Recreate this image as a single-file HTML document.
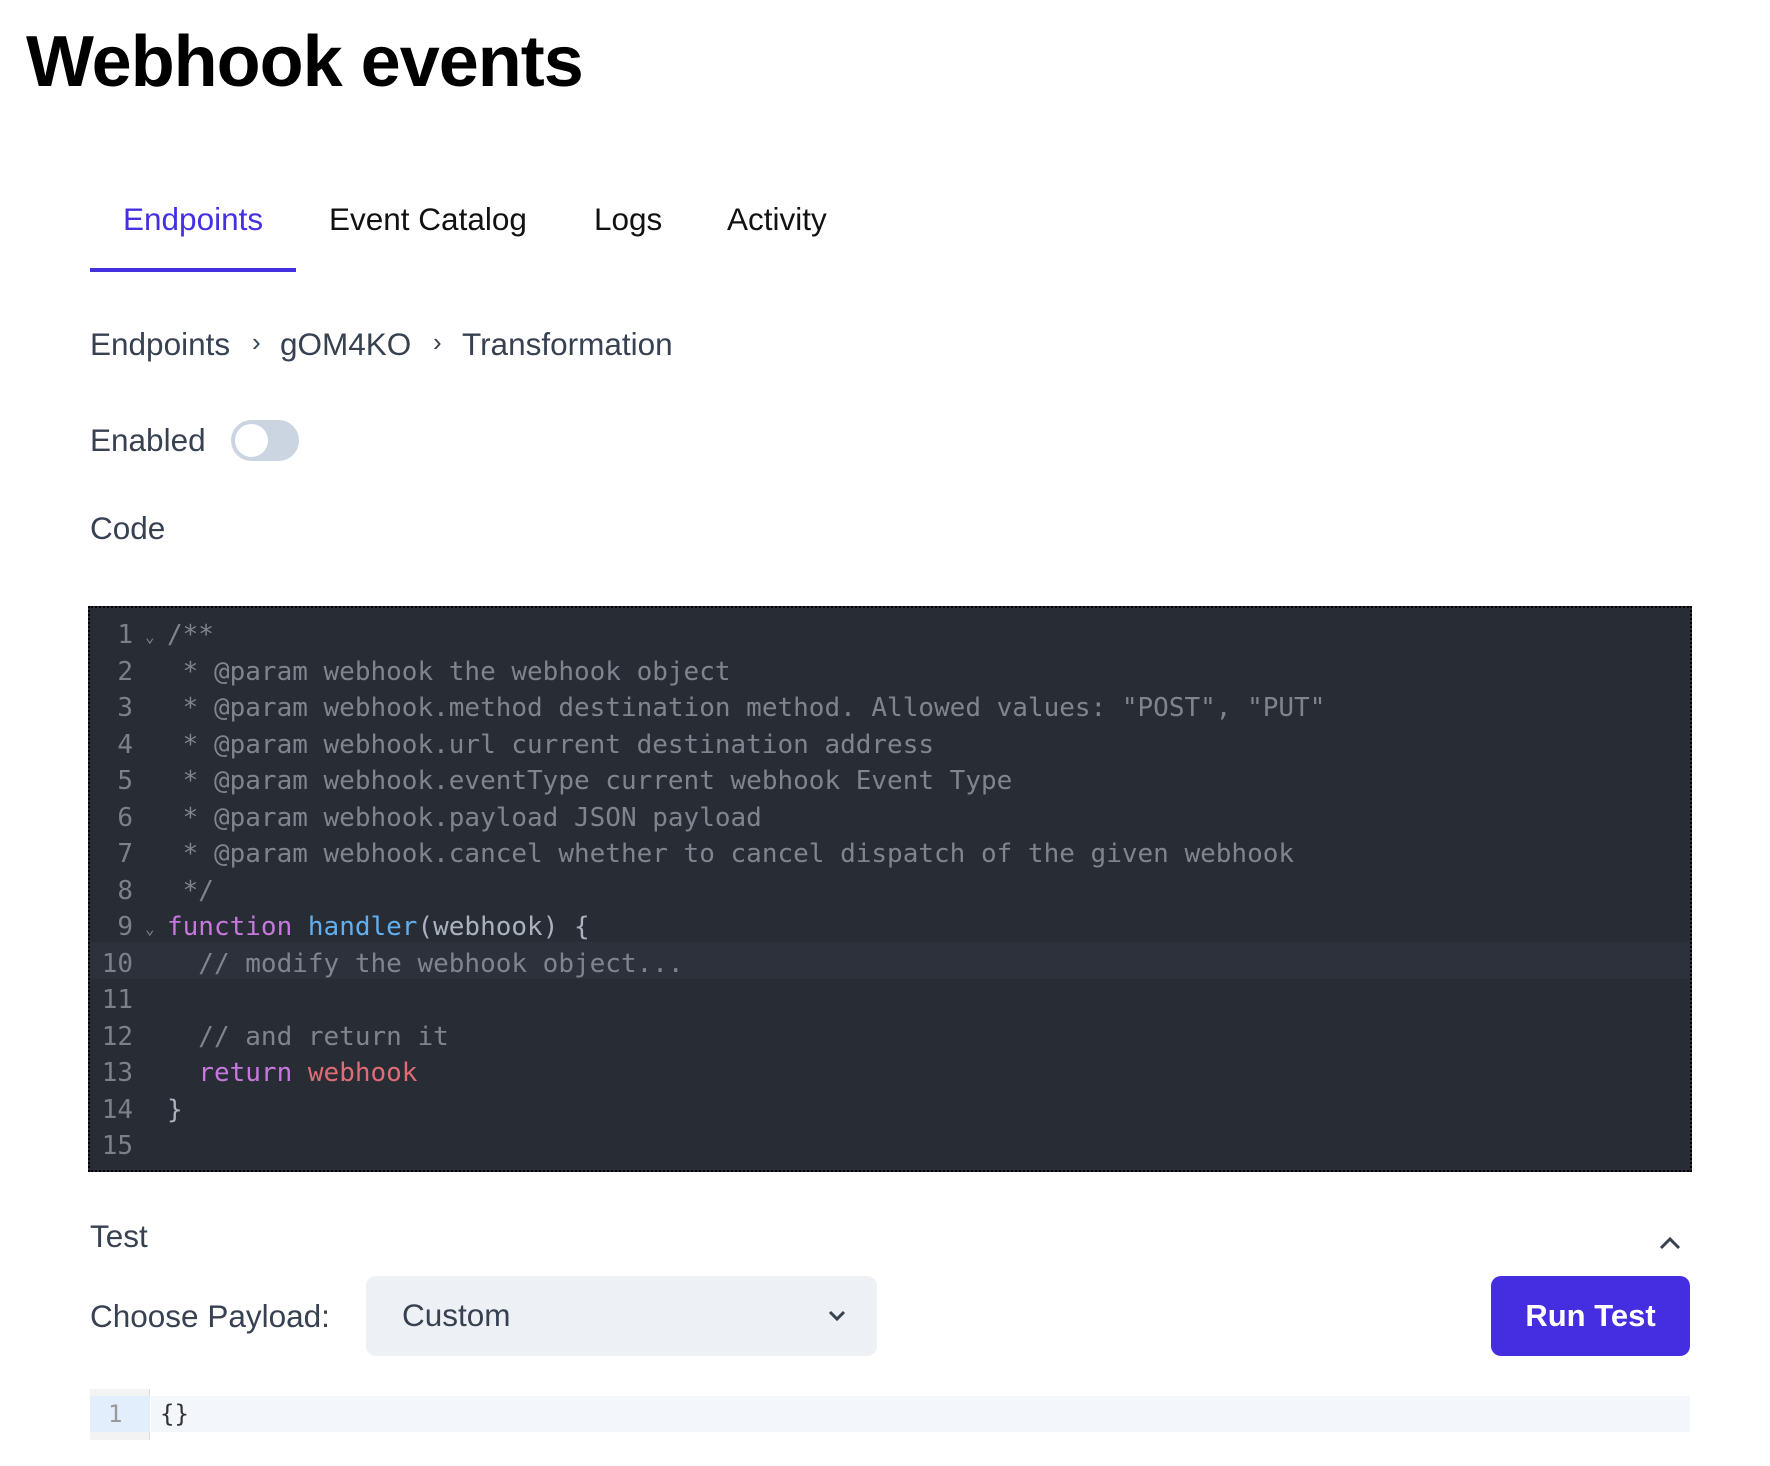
<!DOCTYPE html>
<html><head><meta charset="utf-8"><style>
*{margin:0;padding:0;box-sizing:border-box}
body{width:1770px;height:1466px;background:#fff;position:relative;font-family:"Liberation Sans",sans-serif;color:#374151;overflow:hidden}
.a{position:absolute;white-space:pre}
h1{position:absolute;left:26px;top:20px;font-size:72px;font-weight:700;color:#000;letter-spacing:-1px;line-height:84px}
.tab{position:absolute;top:201px;font-size:31.5px;line-height:36px;color:#111}
.t{font-size:31.5px;line-height:36px}
.code{position:absolute;left:88px;top:606px;width:1604px;height:566px;background:#282c34;border:2px dotted #000;font-family:"DejaVu Sans Mono","Liberation Mono",monospace;font-size:26px;color:#7f848e}
.ln{position:absolute;left:0;width:43px;text-align:right;color:#7b808a}
.l{position:absolute;left:77px;white-space:pre}
.row{position:absolute;left:0;right:0;height:36.5px;line-height:36.5px}
</style></head><body>
<h1>Webhook events</h1>
<div class="tab" style="left:123px;color:#4430e0">Endpoints</div>
<div class="tab" style="left:329px">Event Catalog</div>
<div class="tab" style="left:594px">Logs</div>
<div class="tab" style="left:727px">Activity</div>
<div class="a" style="left:90px;top:268px;width:206px;height:4px;background:#4430e0"></div>

<div class="a t" style="left:90px;top:326px">Endpoints</div>
<div class="a t" style="left:252px;top:324px;font-size:26px">›</div>
<div class="a t" style="left:280px;top:326px">gOM4KO</div>
<div class="a t" style="left:433px;top:324px;font-size:26px">›</div>
<div class="a t" style="left:462px;top:326px">Transformation</div>

<div class="a t" style="left:90px;top:422px">Enabled</div>
<div class="a" style="left:231px;top:420px;width:68px;height:41px;border-radius:21px;background:#cbd5e1"></div>
<div class="a" style="left:235px;top:424px;width:33px;height:33px;border-radius:50%;background:#fff"></div>

<div class="a t" style="left:90px;top:510px">Code</div>

<div class="code">
<div class="row" style="top:334px;background:#2c313b"></div>
<div class="row" style="top:9px"><span class="ln">1</span><span class="a" style="left:55px;top:2px;font-size:16px">⌄</span><span class="l">/**</span></div>
<div class="row" style="top:45.5px"><span class="ln">2</span><span class="l"> * @param webhook the webhook object</span></div>
<div class="row" style="top:82px"><span class="ln">3</span><span class="l"> * @param webhook.method destination method. Allowed values: "POST", "PUT"</span></div>
<div class="row" style="top:118.5px"><span class="ln">4</span><span class="l"> * @param webhook.url current destination address</span></div>
<div class="row" style="top:155px"><span class="ln">5</span><span class="l"> * @param webhook.eventType current webhook Event Type</span></div>
<div class="row" style="top:191.5px"><span class="ln">6</span><span class="l"> * @param webhook.payload JSON payload</span></div>
<div class="row" style="top:228px"><span class="ln">7</span><span class="l"> * @param webhook.cancel whether to cancel dispatch of the given webhook</span></div>
<div class="row" style="top:264.5px"><span class="ln">8</span><span class="l"> */</span></div>
<div class="row" style="top:301px"><span class="ln">9</span><span class="a" style="left:55px;top:2px;font-size:16px">⌄</span><span class="l"><span style="color:#c678dd">function</span> <span style="color:#61afef">handler</span><span style="color:#abb2bf">(webhook) {</span></span></div>
<div class="row" style="top:337.5px"><span class="ln">10</span><span class="l">  // modify the webhook object...</span></div>
<div class="row" style="top:374px"><span class="ln">11</span></div>
<div class="row" style="top:410.5px"><span class="ln">12</span><span class="l">  // and return it</span></div>
<div class="row" style="top:447px"><span class="ln">13</span><span class="l">  <span style="color:#c678dd">return</span> <span style="color:#e06c75">webhook</span></span></div>
<div class="row" style="top:483.5px"><span class="ln">14</span><span class="l" style="color:#abb2bf">}</span></div>
<div class="row" style="top:520px"><span class="ln">15</span></div>
</div>

<div class="a t" style="left:90px;top:1218px">Test</div>
<svg class="a" style="left:1658px;top:1234px" width="24" height="18" viewBox="0 0 24 18"><path d="M3 14 L12 5 L21 14" fill="none" stroke="#374151" stroke-width="3"/></svg>

<div class="a t" style="left:90px;top:1298px">Choose Payload:</div>
<div class="a" style="left:366px;top:1276px;width:511px;height:80px;border-radius:10px;background:#edf0f5"></div>
<div class="a t" style="left:402px;top:1297px">Custom</div>
<svg class="a" style="left:827px;top:1308px" width="20" height="16" viewBox="0 0 20 16"><path d="M3 4 L10 11 L17 4" fill="none" stroke="#374151" stroke-width="3"/></svg>
<div class="a" style="left:1491px;top:1276px;width:199px;height:80px;border-radius:10px;background:#452ee0;color:#fff;font-weight:700;font-size:31px;line-height:80px;text-align:center">Run Test</div>

<div class="a" style="left:90px;top:1389px;width:60px;height:51px;background:#f3f3f3;border-right:1px solid #ddd"></div>
<div class="a" style="left:90px;top:1396px;width:60px;height:36px;background:#e3eefc"></div>
<div class="a" style="left:151px;top:1396px;width:1539px;height:36px;background:#f3f7fc"></div>
<div class="a" style="left:108px;top:1397px;font-family:'DejaVu Sans Mono',monospace;font-size:24px;line-height:34px;color:#999">1</div>
<div class="a" style="left:160px;top:1397px;font-family:'DejaVu Sans Mono',monospace;font-size:24px;line-height:34px;color:#333">{}</div>
</body></html>
